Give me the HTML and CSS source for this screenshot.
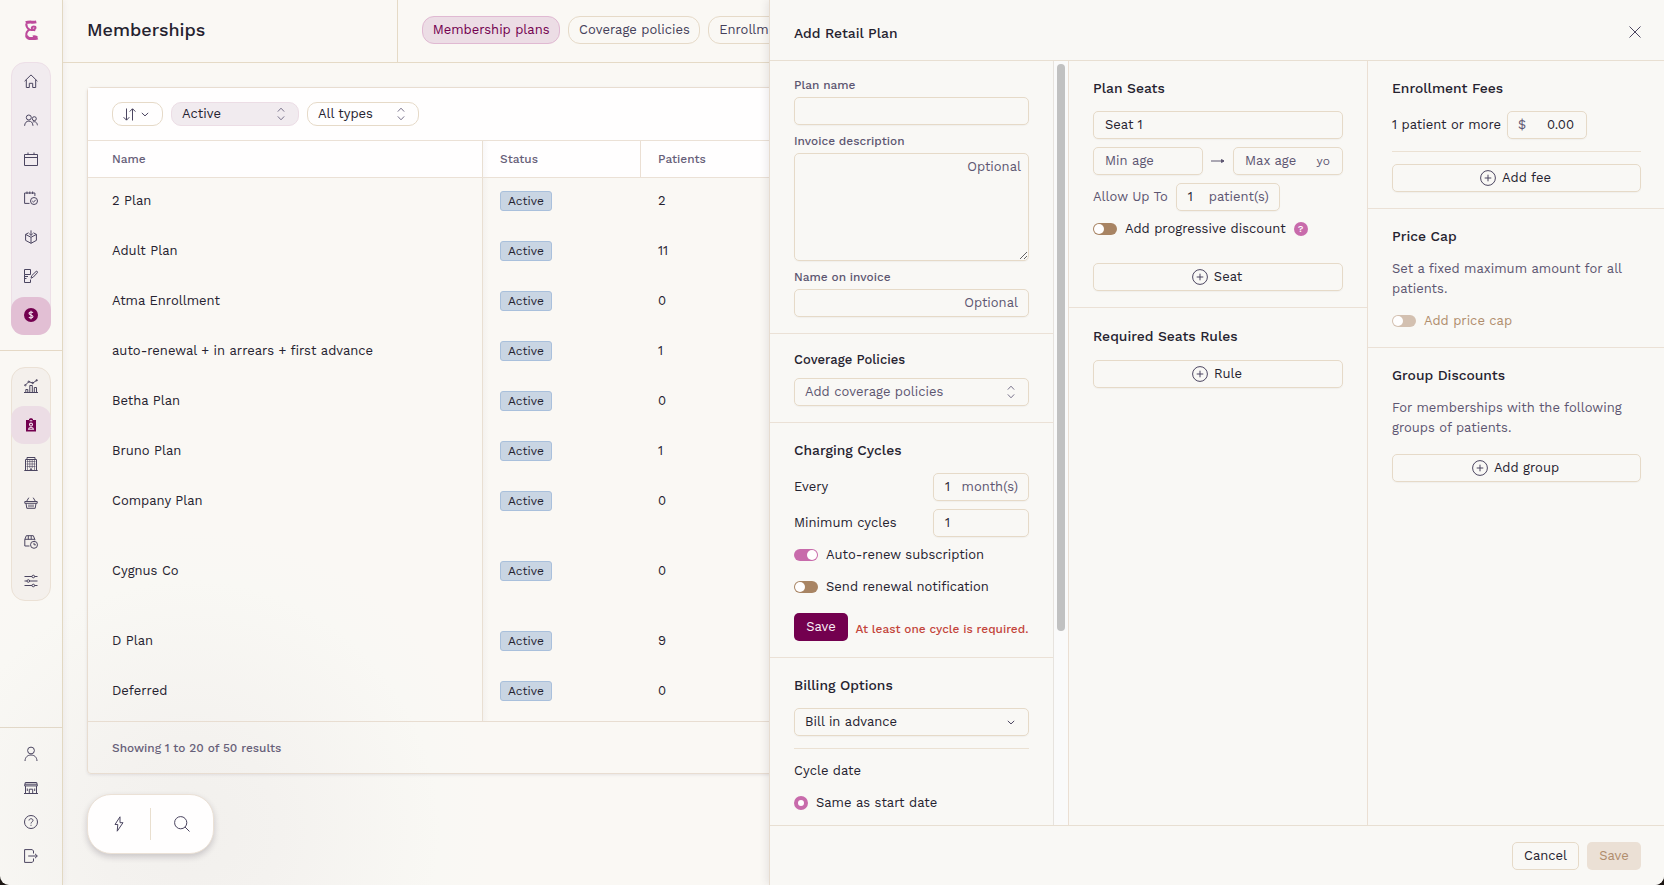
FILE: index.html
```html
<!DOCTYPE html>
<html lang="en">
<head>
    <meta charset="UTF-8">
    <meta name="viewport" content="width=device-width, initial-scale=1.0">
    <title>Memberships</title>
    <link rel="stylesheet" href="styles.css">
</head>
<body>
    <svg class="sprite" aria-hidden="true">
        <symbol id="i-plus" viewBox="0 0 16 16"><circle cx="8" cy="8" r="7.4"/><path d="M8 4.7v6.6M4.7 8h6.6"/></symbol>
        <symbol id="i-updown" viewBox="0 0 8 14"><path d="M.8 4.6 4 1.2l3.2 3.4M.8 9.4 4 12.8l3.2-3.4"/></symbol>
        <symbol id="i-down" viewBox="0 0 8 5"><path d="M.8.9 4 3.9 7.2.9"/></symbol>
    </svg>

    <div class="app">
        <aside class="sidebar">
            <div class="logo">
                <svg width="15" height="21" viewBox="0 0 15 21"><path class="bar" d="M12.300 1.900C9 2.600 5 1.500 1.800 2.700"/><path d="M2.200 3.500c0 2.500 1.300 4.900 3.200 6.100C3 11 2 13.500 2.400 15.800"/><path d="M5.400 9.600c2 .6 6.100.2 6.100-1.800 0-1.700-3.300-1.600-3.700-.1-.3 1.400 1.400 2.700 3.400 2.400"/><path class="bar" d="M2.500 15.500c.3 2.600 3 3.400 5.500 3 2-.3 3.800.6 5.500-.5M13 18c-1-1.300-2.600-1.500-4-1"/></svg>
            </div>
            <nav class="nav nav-main">
                <a class="nav-item"><svg width="14" height="14" viewBox="0 0 14 14"><path d="M.6 7.200 7 .9l6.400 6.300M2.300 5.800v7.700h3V9.300h3.400v4.200h3V5.800"/></svg></a>
                <a class="nav-item"><svg width="14" height="14" viewBox="0 0 14 14"><circle cx="4.800" cy="4.500" r="2.500"/><circle cx="10.300" cy="5.700" r="2"/><path d="M.6 12.800c.2-3 1.800-4.700 4.200-4.700S8.800 9.800 9 12.800M8.700 9.100c2.500-1.200 4.500.4 4.700 3.200"/></svg></a>
                <a class="nav-item"><svg width="14" height="14" viewBox="0 0 14 14"><path d="M.5 2.500h13v11H.5zM.5 5.500h13M4 .5V3M10 .5V3"/></svg></a>
                <a class="nav-item"><svg width="14" height="14" viewBox="0 0 14 14"><path d="M5.500 12.400H.6V2h10.300v3M3 .5V3M5.800.5V3M8.600.5V3"/><circle cx="10" cy="10" r="3.500"/><path d="m8.300 10 1.200 1.200 2.200-2.400"/></svg></a>
                <a class="nav-item"><svg width="14" height="14" viewBox="0 0 14 14"><path d="M4.600 2.800 1.600 4.400v6L7 13.300l5.400-2.900v-6l-3-1.600M1.600 4.400 7 7.300l5.400-2.900M7 7.300v6M7 .4v4.800M5.200 3.700 7 5.400l1.800-1.700"/></svg></a>
                <a class="nav-item"><svg width="14" height="14" viewBox="0 0 14 14"><path d="M.5.5h6v5h-6zM.5 5.500v8h6v-3M.5 7.500H4M.5 9.500h2M7 9.200l.7-2.500 4.300-4.200c1-.8 2 .4 1.300 1.300L9.200 8.200z"/></svg></a>
                <a class="nav-item active"><svg class="solid" width="14" height="14" viewBox="0 0 14 14"><circle cx="7" cy="7" r="7"/><path class="cut" d="M9 4.700C8.300 3.800 5.100 3.600 5 5.300c0 2 4 1.200 4 3.300 0 1.700-3.200 1.700-4.100.5M7 2.700v8.600"/></svg></a>
            </nav>
            <nav class="nav nav-admin">
                <a class="nav-item"><svg width="14" height="14" viewBox="0 0 14 14"><path d="M0 13.500h14M1.800 13.400V10.500h2v2.900M5.800 13.400V6.500h2.500v6.900M10.300 13.400V8.500h2.200v4.900M1.300 6.200l3.500-3.500 4 1.300 4-2.700"/><circle cx="1.300" cy="6.200" r=".7"/><circle cx="4.800" cy="2.700" r=".7"/><circle cx="8.700" cy="4" r=".7"/><circle cx="12.700" cy="1.300" r=".7"/></svg></a>
                <a class="nav-item active"><svg class="solid" width="10" height="14" viewBox="0 0 10 14"><path d="M0 2h3V1l2-1 2 1v1h3v11.500H0z"/><circle class="cut" cx="5" cy="6.600" r="1.500"/><path class="cut" d="M2.500 11.300c.3-2.500 4.700-2.500 5 0zM3.700 2.800h2.600"/></svg></a>
                <a class="nav-item"><svg width="14" height="14" viewBox="0 0 14 14"><path d="M.3 13.500h13.400M1.500 13.400V2.500h11v10.900M3 2.500v-2h8v2M5.800 13.400l1.200-2 1.200 2"/><path class="thin" d="M2.500 4.500h9M2.500 7h9M2.500 9.500h9M3.500 3v10M5.800 3v8M8.200 3v8M10.500 3v10"/></svg></a>
                <a class="nav-item"><svg width="14" height="14" viewBox="0 0 14 14"><path d="M.8 5.500h12.400v1.800H.8zM2 7.300l.8 5h8.400l.8-5M2.500 5.500 4.800 1.700M11.500 5.500 9.200 1.700M5 8.500v2.700M7 8.500v2.700M9 8.500v2.700"/></svg></a>
                <a class="nav-item"><svg width="14" height="14" viewBox="0 0 14 14"><path d="M5.500 11H.8V4.500l1.500-3.800h7l1.500 3.600v1M.8 4.300h10M4.300.7v3.600M7.200.7v3.600"/><circle cx="10" cy="9.800" r="3.500"/><path d="M10 7.800v2h1.900"/></svg></a>
                <a class="nav-item"><svg width="14" height="14" viewBox="0 0 14 14"><path d="M.5 2.500h7.500M10.500 2.500h3M.5 7h2.500M5.500 7h8M.5 11.500h7.500M10.500 11.500h3"/><circle cx="9.300" cy="2.500" r="1.300"/><circle cx="4.300" cy="7" r="1.300"/><circle cx="9.300" cy="11.500" r="1.300"/></svg></a>
            </nav>
            <nav class="nav-bottom">
                <a><svg width="14" height="16" viewBox="0 0 14 16"><circle cx="7" cy="4.500" r="3.400"/><path d="M1 15c.2-4 2.700-6 6-6s5.800 2 6 6"/></svg></a>
                <a><svg width="14" height="14" viewBox="0 0 14 14"><path d="M1.300 1.500h11.400l.7 3.400H.6zM.8 3.200h12.400M1.500 5v7.500M12.500 5v7.500M0 12.500h14M5.300 12.500V8.200h3.400v4.300M3.300 7.500v2.500M10.700 7.500v2.500"/></svg></a>
                <a><svg width="14" height="14" viewBox="0 0 14 14"><circle cx="7" cy="7" r="6.500"/><path d="M5 5.500c.1-2.400 4-2.300 4-.1C9 6.900 7 6.900 7 8.500M7 9.800v1"/></svg></a>
                <a><svg width="14" height="14" viewBox="0 0 14 14"><path d="M9.500 4.500V2L8.300.6H.6v12.800h7.700L9.500 12V9.500M4.200 7h9M11 4.800 13.300 7 11 9.200"/></svg></a>
            </nav>
        </aside>

        <main class="main">
            <header class="topbar">
                <h1>Memberships</h1>
                <div class="tabs">
                    <button class="tab selected">Membership plans</button>
                    <button class="tab">Coverage policies</button>
                    <button class="tab">Enrollments</button>
                </div>
            </header>

            <section class="card">
                <div class="filters">
                    <button class="pill pill-sort">
                        <svg width="13" height="13" viewBox="0 0 13 13"><path d="M3.500.5v11.500M.6 9.200 3.500 12.200 6.300 9.200M9.500 12.500V1M6.700 3.600 9.500.7l2.900 2.900"/></svg>
                        <svg width="8" height="5"><use href="#i-down"/></svg>
                    </button>
                    <button class="pill pill-status">Active <svg class="chev" width="8" height="14"><use href="#i-updown"/></svg></button>
                    <button class="pill pill-type">All types <svg class="chev" width="8" height="14"><use href="#i-updown"/></svg></button>
                </div>
                <div class="row head">
                    <div class="col-name">Name</div>
                    <div class="col-status">Status</div>
                    <div class="col-patients">Patients</div>
                </div>
                <div class="rows">
                    <div class="row"><div class="col-name">2 Plan</div><div class="col-status"><span class="badge">Active</span></div><div class="col-patients">2</div></div>
                    <div class="row"><div class="col-name">Adult Plan</div><div class="col-status"><span class="badge">Active</span></div><div class="col-patients">11</div></div>
                    <div class="row"><div class="col-name">Atma Enrollment</div><div class="col-status"><span class="badge">Active</span></div><div class="col-patients">0</div></div>
                    <div class="row"><div class="col-name">auto-renewal + in arrears + first advance</div><div class="col-status"><span class="badge">Active</span></div><div class="col-patients">1</div></div>
                    <div class="row"><div class="col-name">Betha Plan</div><div class="col-status"><span class="badge">Active</span></div><div class="col-patients">0</div></div>
                    <div class="row"><div class="col-name">Bruno Plan</div><div class="col-status"><span class="badge">Active</span></div><div class="col-patients">1</div></div>
                    <div class="row"><div class="col-name">Company Plan</div><div class="col-status"><span class="badge">Active</span></div><div class="col-patients">0</div></div>
                    <div class="row tall"><div class="col-name">Cygnus Co</div><div class="col-status"><span class="badge">Active</span></div><div class="col-patients">0</div></div>
                    <div class="row"><div class="col-name">D Plan</div><div class="col-status"><span class="badge">Active</span></div><div class="col-patients">9</div></div>
                    <div class="row last"><div class="col-name">Deferred</div><div class="col-status"><span class="badge">Active</span></div><div class="col-patients">0</div></div>
                </div>
                <div class="card-footer">Showing 1 to 20 of 50 results</div>
            </section>

            <div class="quickbar">
                <button><svg width="10" height="16" viewBox="0 0 10 16"><path d="M6 .8 1 8.500h2.800L3.200 15.200 9 6.700H6z"/></svg></button>
                <button><svg width="16" height="16" viewBox="0 0 16 16"><circle cx="6.700" cy="6.700" r="6.100"/><path d="m11 11 4.500 4.500"/></svg></button>
            </div>
        </main>

        <div class="panel">
            <header class="panel-header">
                <h2>Add Retail Plan</h2>
                <button class="close"><svg width="12" height="12" viewBox="0 0 12 12"><path d="m.5.5 11 11M11.500.5l-11 11"/></svg></button>
            </header>

            <div class="panel-body">
                <div class="panel-col col-form">
                    <section>
                        <label>Plan name</label>
                        <input class="field" type="text">
                        <label>Invoice description</label>
                        <div class="area">
                            <textarea class="field"></textarea>
                            <span class="hint">Optional</span>
                        </div>
                        <label>Name on invoice</label>
                        <div class="field end muted"><span>Optional</span></div>
                    </section>
                    <section class="coverage">
                        <h3>Coverage Policies</h3>
                        <div class="field select muted"><span>Add coverage policies</span><svg class="chev" width="8" height="14"><use href="#i-updown"/></svg></div>
                    </section>
                    <section>
                        <h3>Charging Cycles</h3>
                        <div class="line">Every <div class="field short">1 <span class="unit">month(s)</span></div></div>
                        <div class="line">Minimum cycles <div class="field short">1</div></div>
                        <div class="switch-row"><i class="switch on"></i>Auto-renew subscription</div>
                        <div class="switch-row second"><i class="switch"></i>Send renewal notification</div>
                        <div class="save-row"><button class="btn primary">Save</button><span class="error">At least one cycle is required.</span></div>
                    </section>
                    <section>
                        <h3>Billing Options</h3>
                        <div class="field select"><span>Bill in advance</span><svg width="8" height="5"><use href="#i-down"/></svg></div>
                        <hr>
                        <div class="switch-row">Cycle date</div>
                        <div class="switch-row second"><i class="radio"></i>Same as start date</div>
                    </section>
                </div>
                <div class="scrollbar"><div class="thumb"></div></div>

                <div class="panel-col col-seats">
                    <section>
                        <h3>Plan Seats</h3>
                        <div class="field">Seat 1</div>
                        <div class="line ages">
                            <div class="field muted">Min age</div>
                            <svg width="14" height="8" viewBox="0 0 14 8"><path d="M0 4h13M10.500 2.500 13 4l-2.500 1.500z"/></svg>
                            <div class="field muted">Max age <small>yo</small></div>
                        </div>
                        <div class="line allow">Allow Up To <div class="field">1 <span class="unit">patient(s)</span></div></div>
                        <div class="switch-row"><i class="switch"></i>Add progressive discount <span class="help">?</span></div>
                        <button class="btn wide seat-btn"><svg width="16" height="16"><use href="#i-plus"/></svg>Seat</button>
                    </section>
                    <section class="open rules">
                        <h3>Required Seats Rules</h3>
                        <button class="btn wide"><svg width="16" height="16"><use href="#i-plus"/></svg>Rule</button>
                    </section>
                </div>

                <div class="panel-col col-fees">
                    <section>
                        <h3>Enrollment Fees</h3>
                        <div class="line fee">1 patient or more <div class="field"><span>$</span>0.00</div></div>
                        <hr>
                        <button class="btn wide"><svg width="16" height="16"><use href="#i-plus"/></svg>Add fee</button>
                    </section>
                    <section>
                        <h3>Price Cap</h3>
                        <p>Set a fixed maximum amount for all patients.</p>
                        <div class="switch-row second off"><i class="switch"></i>Add price cap</div>
                    </section>
                    <section class="open">
                        <h3>Group Discounts</h3>
                        <p>For memberships with the following groups of patients.</p>
                        <button class="btn wide group-btn"><svg width="16" height="16"><use href="#i-plus"/></svg>Add group</button>
                    </section>
                </div>
            </div>

            <footer class="panel-footer">
                <button class="btn cancel">Cancel</button>
                <button class="btn disabled">Save</button>
            </footer>
        </div>
    </div>
</body>
</html>
```
FILE: styles.css
```css
* {
    margin: 0;
    padding: 0;
    box-sizing: border-box;
}

body {
    font-family: "Work Sans", Roboto, sans-serif;
    font-size: 13px;
    line-height: 20px;
    color: #25222f;
    background: #1d1714;
    height: 100vh;
    overflow: hidden;
}

button,
input,
textarea {
    font: inherit;
    color: inherit;
    background: none;
    border: none;
    outline: none;
}

svg {
    display: block;
    flex: none;
    overflow: visible;
    fill: none;
    stroke: #4b4560;
    stroke-width: 1;
}

.sprite {
    position: absolute;
    width: 0;
    height: 0;
}

.app {
    position: relative;
    display: flex;
    height: 885px;
    overflow: hidden;
    border-radius: 0 0 9px 9px;
    background: radial-gradient(circle at 190px 830px, #f2f0ed 0, #f4f2ef 90px, #f9f8f4 250px, #faf8f4 300px);
}

/* sidebar */
.sidebar {
    width: 63px;
    flex: none;
    display: flex;
    flex-direction: column;
    border-right: 1px solid #e2d8c2;
    box-shadow: 1px 0 6px rgba(60, 40, 90, 0.06);
}

.logo {
    height: 62px;
    padding: 20px 0 0 24px;
}

.logo svg {
    stroke: #bd4a9b;
    stroke-width: 2;
}

.logo .bar {
    stroke-width: 3;
}

.nav {
    width: 40px;
    margin-left: 11px;
    border: 1px solid #eddfe7;
    border-radius: 14px;
    background: #f1ebef;
}

.nav-item {
    height: 38px;
    margin: 0 -1px 1px;
    display: flex;
    align-items: center;
    justify-content: center;
    border-radius: 13px;
}

.nav-item svg {
    position: relative;
    top: -1px;
}

.nav-main {
    height: 273px;
}

.nav-main .active {
    background: #e2bfd4;
}

.nav-admin {
    position: relative;
    height: 234px;
    margin-top: 32px;
    background: #f4f0ec;
    border-color: #ebe1d5;
}

.nav-admin::before {
    content: "";
    position: absolute;
    top: -18px;
    left: -12px;
    width: 62px;
    height: 1px;
    background: #e5d9c6;
}

.nav-admin .active {
    margin-top: -1px;
    margin-bottom: 2px;
    background: #ecdde5;
}

.nav-admin .active svg {
    top: 0;
}

.thin {
    stroke-width: 0.6;
}

.solid {
    fill: #73004f;
    stroke: none;
}

.solid .cut {
    fill: none;
    stroke: #f4e3ee;
    stroke-width: 1.1;
}

.nav-bottom {
    margin-top: auto;
    height: 158px;
    border-top: 1px solid #e2d8c8;
    padding-top: 9px;
}

.nav-bottom a {
    height: 34px;
    display: flex;
    align-items: center;
    justify-content: center;
}

/* page */
.main {
    width: 707px;
    flex: none;
    overflow: hidden;
}

.topbar {
    width: 1200px;
    height: 63px;
    display: flex;
    border-bottom: 1px solid #e5dac6;
}

h1 {
    width: 335px;
    padding-left: 24px;
    border-right: 1px solid #e5dac6;
    font-size: 18px;
    font-weight: 500;
    line-height: 60px;
}

.tabs {
    display: flex;
    gap: 8px;
    padding: 16px 0 0 24px;
}

.tab {
    height: 28px;
    padding: 0 9.7px;
    border: 1px solid #e6dac8;
    border-radius: 12px;
    color: #45405a;
}

.tab.selected {
    background: #ecdde5;
    border-color: #e0b9d2;
    color: #73004f;
}

.card {
    width: 1176px;
    margin: 24px 0 0 24px;
    height: 687px;
    border: 1px solid #e8ddd1;
    border-radius: 4px;
    box-shadow: 0 1px 3px rgba(50, 40, 80, 0.1);
}

.filters {
    height: 53px;
    display: flex;
    gap: 8px;
    padding: 14px 0 0 24px;
    background: #fffefe;
    border-bottom: 1px solid #ebe1d6;
}

.pill {
    height: 24px;
    display: flex;
    align-items: center;
    justify-content: space-between;
    padding: 0 13px 0 10px;
    border: 1px solid #e6dac8;
    border-radius: 10px;
}

.pill-sort {
    width: 51px;
    padding: 0 13px 0 10px;
}

.pill-status {
    width: 128px;
    background: #f1ebef;
    border-color: #ecdde5;
}

.pill-type {
    width: 112px;
}

.chev {
    stroke: #77718a;
}

.row {
    display: flex;
    height: 50px;
}

.row > div {
    display: flex;
    align-items: center;
    padding-bottom: 4px;
}

.row .col-name {
    width: 395px;
    padding-left: 24px;
    border-right: 1px solid #e9dfd2;
}

.row .col-status {
    width: 158px;
    padding-left: 17px;
    background: linear-gradient(90deg, rgba(60, 40, 60, 0.03), transparent 6px);
}

.row .col-patients {
    padding-left: 17px;
}

.row.tall {
    height: 90px;
}

.row.last {
    height: 53px;
}

.row.last > div {
    padding-bottom: 7px;
}

.row.head {
    height: 37px;
    background: #fffefe;
    border-bottom: 1px solid #ebe1d6;
    font-size: 11.9px;
    font-weight: 500;
    color: #676079;
}

.row.head > div {
    padding-bottom: 0;
}

.head .col-status {
    border-right: 1px solid #ebdfd3;
}

.badge {
    width: 52px;
    height: 20px;
    text-align: center;
    font-size: 12px;
    line-height: 18px;
    background: #c9d5e3;
    border: 1px solid #a9c0dc;
    border-radius: 3px;
}

.card-footer {
    padding-left: 24px;
    border-top: 1px solid #e8ddd1;
    font-size: 11.9px;
    font-weight: 500;
    line-height: 52px;
    color: #676079;
}

.quickbar {
    display: flex;
    width: 127px;
    height: 60px;
    margin: 20px 0 0 24px;
    padding: 13px 0;
    background: #fffefe;
    border: 1px solid #ebe1d6;
    border-radius: 24px;
    box-shadow: 0 3px 6px rgba(40, 30, 50, 0.2);
}

.quickbar button {
    flex: 1;
    display: flex;
    align-items: center;
    justify-content: center;
}

.quickbar button + button {
    border-left: 1px solid #e9dfcf;
}

/* slide-over panel */
.panel {
    position: absolute;
    top: 0;
    right: 0;
    width: 895px;
    height: 885px;
    display: flex;
    flex-direction: column;
    background: #f9f8f5;
    border-left: 1px solid #e6dcd0;
    box-shadow: -2px 0 8px rgba(50, 40, 60, 0.1);
}

.panel-header {
    height: 61px;
    display: flex;
    justify-content: space-between;
    padding: 0 23px 0 24px;
    border-bottom: 1px solid #e8dfd2;
}

h2,
h3 {
    font-size: 13.87px;
    font-weight: 500;
}

h2 {
    line-height: 66px;
}

.close {
    height: 64px;
}

.panel-body {
    flex: 1;
    min-height: 0;
    display: flex;
}

.panel-col {
    overflow: hidden;
}

.col-form {
    width: 284px;
    border-right: 1px solid #e7e3de;
}

.scrollbar {
    width: 14px;
    padding: 3px 3px 0;
    background: #fafafa;
}

.thumb {
    height: 567px;
    width: 8px;
    border-radius: 4px;
    background: #c1c1c1;
}

.col-seats {
    width: 300px;
    border-left: 1px solid #ebdfd3;
    border-right: 1px solid #ebdfd3;
}

.col-fees {
    flex: 1;
}

section {
    display: block;
}

.panel-col section {
    padding: 16px 24px;
    border-bottom: 1px solid #ebe1d6;
}

.col-fees section {
    padding-right: 23px;
}

.panel-col .open {
    border-bottom: none;
}

h3 {
    line-height: 23px;
    margin-bottom: 11px;
}

.coverage h3 {
    font-size: 13px;
    line-height: 20px;
    margin-bottom: 8px;
}

.rules h3 {
    line-height: 24px;
    margin-bottom: 12px;
}

label {
    display: block;
    margin-bottom: 4px;
    font-size: 11.9px;
    font-weight: 500;
    line-height: 16px;
    color: #5d5671;
}

.field {
    display: flex;
    align-items: center;
    width: 100%;
    height: 28px;
    padding: 0 11px;
    margin-bottom: 8px;
    border: 1px solid #e6dac8;
    border-radius: 5px;
    box-shadow: 0 1px 1px rgba(60, 40, 60, 0.04);
}

section > .field:last-child {
    margin-bottom: 0;
}

.muted,
.unit,
.hint {
    color: #5d5671;
}

.end {
    justify-content: flex-end;
    padding-right: 10px;
}

.area {
    position: relative;
    height: 108px;
    margin-bottom: 8px;
}

.area textarea {
    display: block;
    height: 108px;
    margin: 0;
}

.hint {
    position: absolute;
    top: 4px;
    right: 8px;
}

.select {
    justify-content: space-between;
    padding: 0 13px 0 10px;
}

.line {
    display: flex;
    align-items: center;
    justify-content: space-between;
    height: 28px;
    margin-bottom: 8px;
}

.line .field {
    margin: 0;
}

.line .short {
    width: 96px;
}

.unit {
    margin-left: auto;
    margin-right: -1px;
}

.switch-row {
    display: flex;
    align-items: center;
    gap: 8px;
    height: 20px;
}

.switch-row.second {
    margin-top: 12px;
}

.switch {
    width: 24px;
    height: 12px;
    padding: 1px;
    border-radius: 6px;
    background: #a88463;
}

.switch::before {
    content: "";
    display: block;
    width: 10px;
    height: 10px;
    border-radius: 50%;
    background: #fffefe;
}

.switch.on {
    background: #c86bab;
}

.switch.on::before {
    margin-left: 12px;
}

.radio {
    width: 14px;
    height: 14px;
    border: 4px solid #c86bab;
    border-radius: 50%;
    background: #fffefe;
}

.save-row {
    display: flex;
    gap: 7.5px;
    height: 28px;
    margin-top: 16px;
}

.btn {
    height: 28px;
    padding: 0 12px;
    border-radius: 5px;
}

.primary {
    width: 54px;
    flex: none;
    background: #73004f;
    color: #fbeff6;
}

.error {
    font-size: 11.85px;
    font-weight: 500;
    line-height: 32px;
    white-space: nowrap;
    color: #c3453b;
}

hr {
    border: none;
    height: 1px;
    margin: 12px 0;
    background: #ebe1d3;
}

.ages .field {
    width: 110px;
}

.ages svg path {
    stroke: #5d5671;
    fill: #5d5671;
}

.ages small {
    margin-left: auto;
    margin-right: 1px;
    font-size: 12px;
}

.allow {
    justify-content: flex-start;
    color: #5d5671;
    gap: 8px;
}

.allow .field {
    width: 104px;
    color: #25222f;
}

.help {
    width: 14px;
    height: 14px;
    border-radius: 50%;
    background: #c86bab;
    color: #fffefe;
    font-size: 10px;
    font-weight: 500;
    line-height: 14px;
    text-align: center;
}

.wide {
    display: flex;
    align-items: center;
    justify-content: center;
    gap: 6px;
    width: 100%;
    padding-right: 14px;
    border: 1px solid #e6dac8;
    box-shadow: 0 1px 1px rgba(60, 40, 60, 0.04);
}

.seat-btn {
    margin-top: 24px;
}

.fee {
    justify-content: flex-start;
    gap: 6px;
}

.fee .field {
    width: 80px;
    padding-left: 10px;
    padding-right: 12px;
    justify-content: space-between;
}

.fee span {
    color: #5d5671;
}

p {
    color: #5d5671;
}

.off {
    color: #b08d6d;
}

.off .switch {
    background: #d3c0b0;
}

.group-btn {
    margin-top: 16px;
}

.panel-footer {
    height: 60px;
    display: flex;
    justify-content: flex-end;
    gap: 8px;
    padding: 16px 23px 0 0;
    border-top: 1px solid #e8dfd2;
}

.cancel {
    width: 67px;
    padding: 0 12px 0 11px;
    border: 1px solid #e6dac8;
}

.disabled {
    width: 54px;
    background: #ebe0d5;
    color: #b08d6d;
}
```
